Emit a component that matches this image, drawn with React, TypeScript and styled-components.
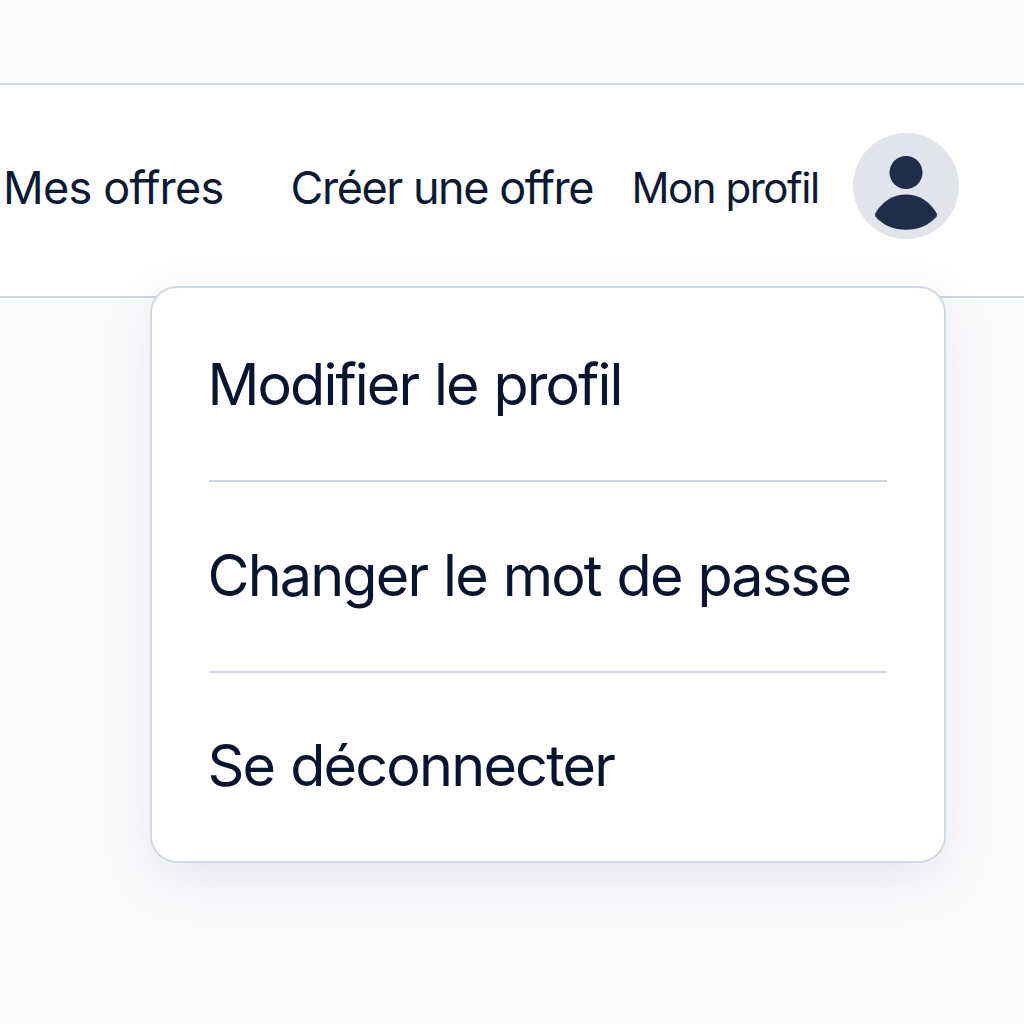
import React from "react";
import styled, { createGlobalStyle } from "styled-components";

const GlobalStyle = createGlobalStyle`
  *, *::before, *::after { box-sizing: border-box; }
  html, body { margin: 0; padding: 0; background: #fafbfe; }
  body { font-family: Inter, "Liberation Sans", sans-serif; overflow: hidden; }
`;

const Page = styled.div`
  position: relative;
  width: 1024px;
  height: 1024px;
  padding-top: 82.5px;
  overflow: hidden;
  background: #fafbfd;
`;

const Header = styled.header`
  display: flex;
  align-items: flex-start;
  height: 215px;
  padding: 48.5px 65px 0 3px;
  background: #fff;
  border-top: 2px solid #d3dbe5;
  border-bottom: 2px solid #d0d7e2;
`;

const NavLink = styled.a<{ $size: number; $gap: number; $spacing: number }>`
  margin-right: ${(p) => p.$gap}px;
  font-size: ${(p) => p.$size}px;
  line-height: 109px;
  letter-spacing: ${(p) => p.$spacing}px;
  color: #0a1934;
  white-space: nowrap;
  text-decoration: none;
`;

const Avatar = styled.svg`
  flex: none;
  width: 106px;
  height: 106px;
  margin-left: auto;
`;

const Menu = styled.div`
  position: absolute;
  top: 286px;
  left: 149.5px;
  width: 796px;
  height: 576.5px;
  padding: 0 57px;
  background: #fff;
  border: 2px solid #d0d8e3;
  border-radius: 27px;
  box-shadow: 0 16px 52px rgba(30, 41, 80, 0.09);
`;

const MenuItem = styled.button<{ $height: number; $line: number; $spacing: number }>`
  display: flex;
  align-items: flex-start;
  width: 100%;
  height: ${(p) => p.$height}px;
  padding: 0;
  border: 0;
  border-bottom: 2px solid #cbd5e1;
  background: none;
  font: 400 57.5px/${(p) => p.$line}px Inter, "Liberation Sans", sans-serif;
  letter-spacing: ${(p) => p.$spacing}px;
  word-spacing: 1.5px;
  color: #07152f;
  text-align: left;
  text-indent: -1px;
  white-space: nowrap;
  &:last-child { border-bottom: 0; }
`;

export default function App() {
  return (
    <Page>
      <GlobalStyle />
      <Header>
        <NavLink $size={45} $gap={67} $spacing={-0.75}>Mes offres</NavLink>
        <NavLink $size={45} $gap={38.5} $spacing={-1.45}>Créer une offre</NavLink>
        <NavLink $size={42} $gap={0} $spacing={-1.45}>Mon profil</NavLink>
        <Avatar viewBox="0 0 106 106">
          <circle cx="53" cy="53" r="53" fill="#e1e4ea" />
          <circle cx="53" cy="39.5" r="16.5" fill="#1e2e4a" />
          <path d="M22.4 83.5Q21.6 82 22.4 80.3C29 68.5 40 61.5 53 61.5S77 68.5 83.6 80.3Q84.4 82 83.6 83.5C76 92.5 65 96.8 53 96.8S30 92.5 22.4 83.5Z" fill="#1e2e4a" />
        </Avatar>
      </Header>
      <Menu>
        <MenuItem $height={194} $line={192} $spacing={-1.9}>Modifier le profil</MenuItem>
        <MenuItem $height={190.5} $line={186} $spacing={-1.85}>Changer le mot de passe</MenuItem>
        <MenuItem $height={188} $line={185} $spacing={-1.8}>Se déconnecter</MenuItem>
      </Menu>
    </Page>
  );
}
